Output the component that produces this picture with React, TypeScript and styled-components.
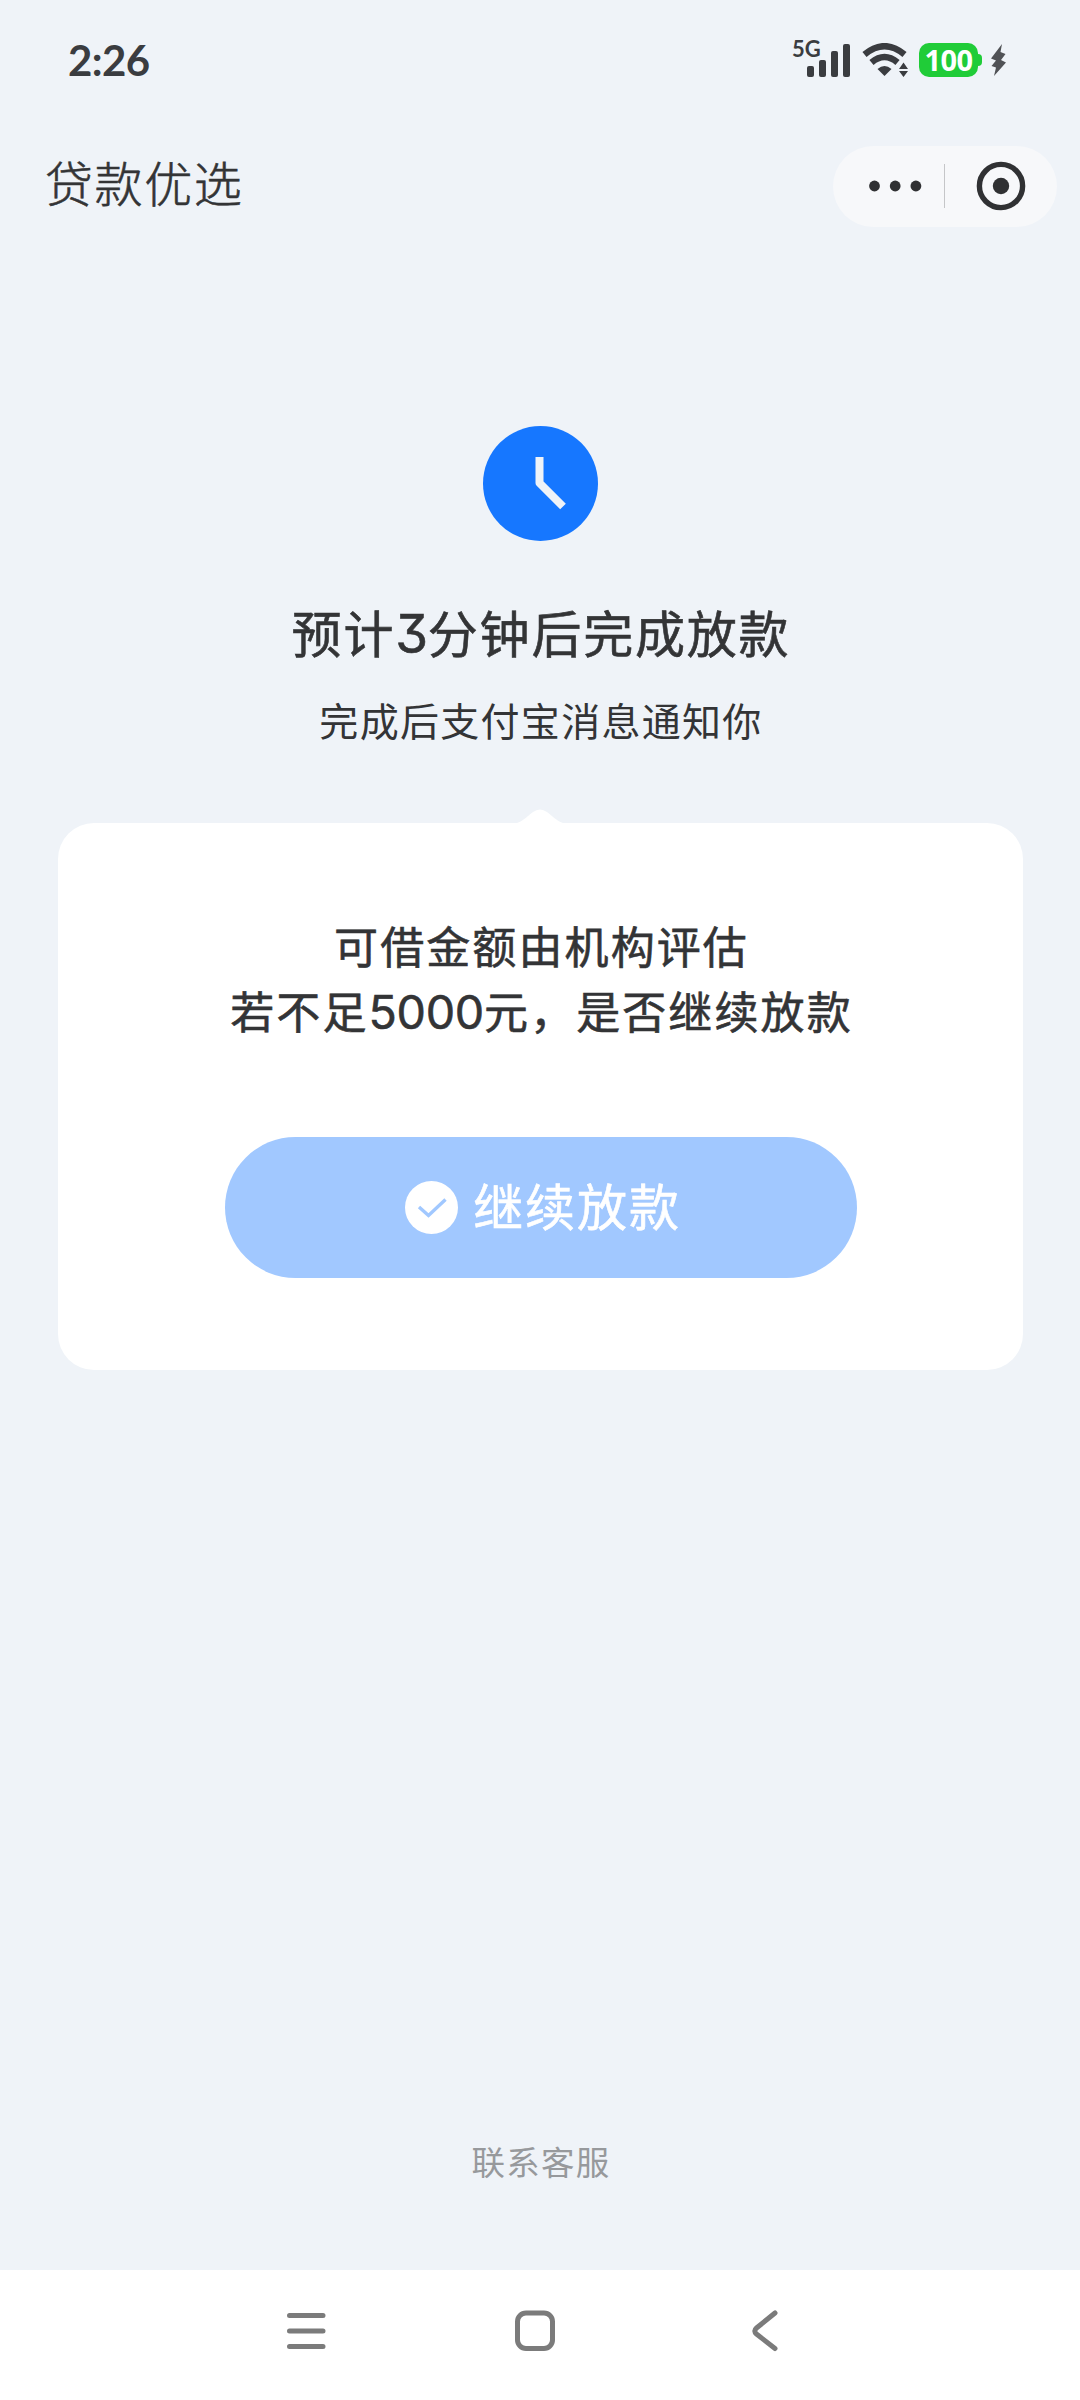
import React from "react";
import styled, { createGlobalStyle } from "styled-components";

const GlobalStyle = createGlobalStyle`
  * { box-sizing: border-box; }
  body { margin: 0; background: #eff3f8; }
`;

const sans = `Inter, "Noto Sans CJK SC", sans-serif`;

const Screen = styled.div`
  width: 1080px;
  height: 2400px;
  display: flex;
  flex-direction: column;
  background: #eff3f8;
  color: #333436;
  font-family: ${sans};
  overflow: hidden;
`;

const StatusBar = styled.header`
  height: 120px;
  padding: 0 73px 0 68px;
  display: flex;
  justify-content: space-between;
  align-items: center;
  color: #3a3c40;
`;

const Time = styled.span`
  font: 700 42px/60px Lato, sans-serif;
  letter-spacing: -0.6px;
`;

const StatusIcons = styled.div`
  height: 40px;
  margin-bottom: 6px;
  display: flex;
  align-items: flex-end;
`;

const Network = styled.div`
  display: flex;
  align-items: flex-start;
  height: 37px;
  margin-right: 12px;
`;

const NetworkLabel = styled.span`
  font: 700 22px/18px Lato, sans-serif;
  width: 15px;
  white-space: nowrap;
`;

const Bars = styled.div`
  height: 37px;
  display: flex;
  align-items: flex-end;
  gap: 5px;
`;

const Bar = styled.i<{ $h: number }>`
  width: 7px;
  height: ${(p) => p.$h}px;
  border-radius: 2px;
  background: #3a3c40;
`;

const Battery = styled.div`
  display: flex;
  align-items: center;
  height: 34px;
  margin: 0 8px 0 11px;
`;

const BatteryBody = styled.span`
  width: 59px;
  height: 34px;
  border-radius: 10px;
  background: #20cc38;
  color: #fff;
  font: 700 29px/34px "Noto Sans", sans-serif;
  text-align: center;
  letter-spacing: -0.6px;
`;

const BatteryTip = styled.i`
  width: 4px;
  height: 12px;
  border-radius: 0 4px 4px 0;
  background: #20cc38;
`;

const TitleBar = styled.div`
  height: 133px;
  padding: 26px 23px 0 45px;
  display: flex;
  justify-content: space-between;
  align-items: flex-start;
`;

const PageTitle = styled.h1`
  margin: 1px 0 0;
  font-size: 48px;
  font-weight: 300;
  line-height: 76px;
  letter-spacing: 1.6px;
  -webkit-text-stroke: 0.6px currentColor;
`;

const Capsule = styled.div`
  width: 224px;
  height: 81px;
  border-radius: 41px;
  background: #f7f8fa;
  display: flex;
  align-items: center;
  justify-content: space-between;
  padding: 0 31px 1px 36px;
`;

const Divider = styled.i`
  width: 1px;
  height: 44px;
  margin: 0 8px 0 -3px;
  background: #c5c6c8;
`;

const Main = styled.main`
  flex: 1;
  display: flex;
  flex-direction: column;
  align-items: center;
  padding-top: 173px;
`;

const Heading = styled.h2`
  margin: 56px 0 0;
  font-size: 50px;
  font-weight: 400;
  line-height: 76px;
  letter-spacing: 1.8px;
  padding-left: 2px;
  font-feature-settings: "cv09";
  -webkit-text-stroke: 0.6px currentColor;
`;

const Subheading = styled.p`
  margin: 19px 0 0;
  font-size: 39px;
  line-height: 60px;
  letter-spacing: 1.3px;
  padding-left: 2px;
`;

const Digits = styled.span`
  font-size: 1.06em;
  line-height: 1;
  letter-spacing: -0.3px;
`;

const Notch = styled.svg`
  display: block;
  margin-top: 57px;
`;

const Card = styled.section`
  width: 965px;
  height: 547px;
  margin-left: 1px;
  border-radius: 36px;
  background: #fff;
  display: flex;
  flex-direction: column;
  align-items: center;
  padding-top: 93px;
`;

const Question = styled.p`
  margin: 0;
  font-size: 44px;
  font-weight: 400;
  line-height: 65px;
  letter-spacing: 2.1px;
  text-align: center;
  padding-left: 2px;
  -webkit-text-stroke: 0.6px currentColor;
`;

const Button = styled.button`
  width: 632px;
  height: 141px;
  margin: 91px 0 0;
  padding: 0 0 0 5px;
  border: 0;
  border-radius: 71px;
  background: #a1c8ff;
  color: #fff;
  display: flex;
  align-items: center;
  justify-content: center;
  gap: 15px;
  font: 400 50px/76px ${sans};
  letter-spacing: 1.9px;
  -webkit-text-stroke: 0.6px currentColor;
`;

const Support = styled.a`
  margin: auto 0 82px;
  padding-left: 2px;
  color: #97999c;
  font-size: 33.5px;
  line-height: 50px;
  letter-spacing: 1.3px;
`;

const NavBar = styled.nav`
  height: 130px;
  background: #fff;
  display: flex;
  justify-content: space-between;
  padding: 38px 299px 0 284px;
`;

const HomeIcon = styled.svg`
  margin: 0 4px 0 -4px;
`;

export default function App() {
  return (
    <Screen lang="zh-CN">
      <GlobalStyle />
      <StatusBar>
        <Time>2:26</Time>
        <StatusIcons>
          <Network>
            <NetworkLabel>5G</NetworkLabel>
            <Bars>
              <Bar $h={11} />
              <Bar $h={17} />
              <Bar $h={26} />
              <Bar $h={33} />
            </Bars>
          </Network>
          <svg width="46" height="34" viewBox="0 0 46 34" fill="none">
            <path d="M2.500 11.500Q22.500 -5 42.500 11.500" stroke="#3a3c40" strokeWidth="6.500" />
            <path d="M9.500 19.500Q22.500 8.500 35.500 19.500" stroke="#3a3c40" strokeWidth="6.500" />
            <path d="M15.500 26Q22.500 20 29.500 26L22.500 33Z" fill="#3a3c40" />
            <path d="M41.500 19.500L46 26H37ZM37 28H46L41.500 34Z" fill="#3a3c40" />
          </svg>
          <Battery>
            <BatteryBody>100</BatteryBody>
            <BatteryTip />
          </Battery>
          <svg width="17" height="34" viewBox="0 0 17 34">
            <path d="M12 1L1 15.500L6 17.500L1.500 23L6 24.500L4 33L16 19.500L11 17L15.500 11L10.500 9Z" fill="#505256" />
          </svg>
        </StatusIcons>
      </StatusBar>

      <TitleBar>
        <PageTitle>贷款优选</PageTitle>
        <Capsule>
          <svg width="54" height="12" viewBox="0 0 54 12" fill="#303133">
            <circle cx="5.500" cy="6" r="5.400" />
            <circle cx="26.200" cy="6" r="5.400" />
            <circle cx="46.900" cy="6" r="5.400" />
          </svg>
          <Divider />
          <svg width="50" height="50" viewBox="0 0 50 50">
            <circle cx="25" cy="25" r="21.600" fill="none" stroke="#303133" strokeWidth="5.400" />
            <circle cx="25" cy="25" r="8.200" fill="#303133" />
          </svg>
        </Capsule>
      </TitleBar>

      <Main>
        <svg width="115" height="115" viewBox="0 0 115 115">
          <circle cx="57.500" cy="57.500" r="57.500" fill="#1677ff" />
          <path d="M56.500 31V57L80 80.500" fill="none" stroke="#eff3f8" strokeWidth="8" strokeLinejoin="round" />
        </svg>
        <Heading>
          预计<Digits>3</Digits>分钟后完成放款
        </Heading>
        <Subheading>完成后支付宝消息通知你</Subheading>
        <Notch width="46" height="14" viewBox="0 0 46 14">
          <path d="M0 14C5 13 12 6 16 3Q23 -2 30 3C34 6 41 13 46 14Z" fill="#fff" />
        </Notch>
        <Card>
          <Question>
            可借金额由机构评估
            <br />
            若不足<Digits>5000</Digits>元，是否继续放款
          </Question>
          <Button>
            <svg width="53" height="53" viewBox="0 0 53 53">
              <circle cx="26.500" cy="26.500" r="26.500" fill="#fff" />
              <path d="M14 26L23.500 34.500L40.500 18.500" fill="none" stroke="#a1c8ff" strokeWidth="3.400" />
            </svg>
            继续放款
          </Button>
        </Card>
        <Support>联系客服</Support>
      </Main>

      <NavBar>
        <svg width="45" height="46" viewBox="0 0 45 46" stroke="#7b7b7b" strokeWidth="5" strokeLinecap="round">
          <path d="M5.500 7.500H39M5.500 23H39M5.500 38.500H39" />
        </svg>
        <HomeIcon width="46" height="46" viewBox="0 0 46 46" fill="none" stroke="#7b7b7b" strokeWidth="5">
          <rect x="5.500" y="5" width="35" height="35.500" rx="8.500" />
        </HomeIcon>
        <svg width="32" height="46" viewBox="0 0 32 46" fill="none" stroke="#7b7b7b" strokeWidth="5" strokeLinecap="round">
          <path d="M26 5L7.500 20Q4 23 7.500 26L26 40.500" />
        </svg>
      </NavBar>
    </Screen>
  );
}
